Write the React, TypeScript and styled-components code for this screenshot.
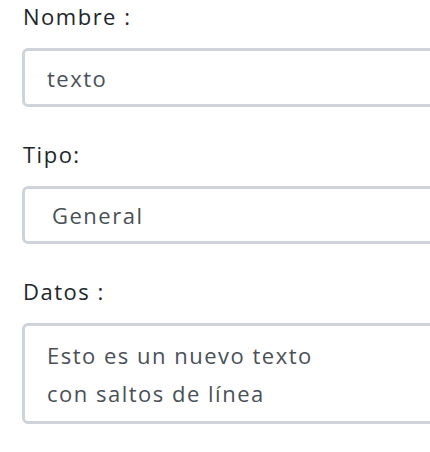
import React from "react";
import styled, { createGlobalStyle } from "styled-components";

const Global = createGlobalStyle`
  html, body {
    margin: 0;
    padding: 0;
    background: #ffffff;
    overflow: hidden;
  }
  body {
    font-family: "Open Sans", "Noto Sans", sans-serif;
  }
`;

const Form = styled.form`
  display: flex;
  flex-direction: column;
  gap: 32px;
  padding: 1px 0 0 22px;
`;

const Group = styled.div`
  display: flex;
  flex-direction: column;
  gap: 16px;
`;

const Label = styled.label`
  padding-left: 1px;
  font-size: 22px;
  line-height: 31px;
  letter-spacing: 1.5px;
  color: #212529;
`;

const Field = styled.div<{ $height: number; $padLeft: number }>`
  box-sizing: border-box;
  width: 460px;
  height: ${(p) => p.$height}px;
  border: 3px solid #ced4da;
  border-radius: 6px;
  background: #ffffff;
  padding-left: ${(p) => p.$padLeft}px;
  display: flex;
  align-items: center;
  font-size: 22px;
  letter-spacing: 1.5px;
  color: #495057;
`;

const Area = styled.div`
  box-sizing: border-box;
  width: 460px;
  height: 101px;
  border: 3px solid #ced4da;
  border-radius: 6px;
  background: #ffffff;
  padding: 10px 0 0 22px;
  font-size: 22px;
  line-height: 38px;
  letter-spacing: 1.5px;
  color: #495057;
  white-space: pre-line;
`;

export default function App() {
  return (
    <>
      <Global />
      <Form>
        <Group>
          <Label>Nombre :</Label>
          <Field $height={59} $padLeft={22}>texto</Field>
        </Group>
        <Group>
          <Label>Tipo:</Label>
          <Field $height={58} $padLeft={27}>General</Field>
        </Group>
        <Group>
          <Label>Datos :</Label>
          <Area>{"Esto es un nuevo texto\ncon saltos de línea"}</Area>
        </Group>
      </Form>
    </>
  );
}
